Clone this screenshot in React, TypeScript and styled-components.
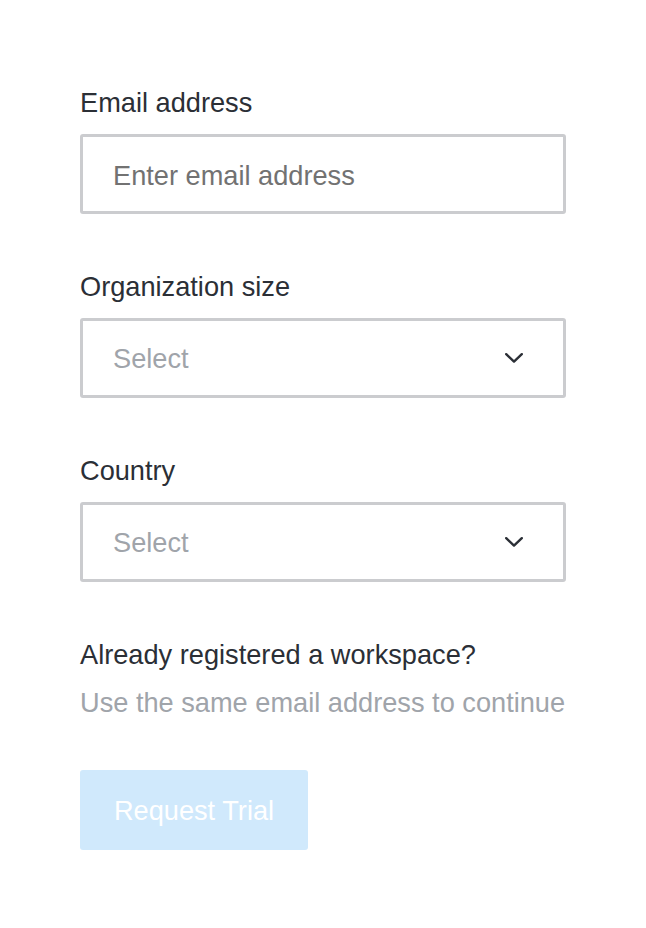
import React from "react";
import styled, { createGlobalStyle } from "styled-components";

const GlobalStyle = createGlobalStyle`
  html, body { margin: 0; padding: 0; background: #ffffff; }
  body { font-family: "Liberation Sans", Arial, Helvetica, sans-serif; }
  * { box-sizing: border-box; }
`;

const Page = styled.div`
  padding: 87px 80px 0 80px;
  width: 646px;
`;

const Form = styled.form`
  display: flex;
  flex-direction: column;
  width: 486px;
`;

const Field = styled.div`
  display: flex;
  flex-direction: column;
  gap: 15px;
  margin-bottom: 57px;
`;

const Label = styled.label`
  font-size: 27.2px;
  line-height: 32px;
  color: #2b2f36;
`;

const TextInput = styled.input`
  height: 80px;
  width: 100%;
  border: 3px solid #cbcccf;
  border-radius: 3px;
  padding: 3px 0 0 30px;
  font-family: "Liberation Sans", Arial, Helvetica, sans-serif;
  font-size: 27.2px;
  color: #2b2f36;
  outline: none;
  background: #fff;
  &::placeholder { color: #727272; }
`;

const SelectBox = styled.div`
  height: 80px;
  width: 100%;
  border: 3px solid #cbcccf;
  border-radius: 3px;
  padding: 0 40px 0 30px;
  display: flex;
  align-items: center;
  justify-content: space-between;
  background: #fff;
`;

const SelectText = styled.span`
  font-size: 27.2px;
  color: #a0a4aa;
  padding-top: 2px;
`;

const Chevron = styled.svg`
  width: 18px;
  height: 10px;
  display: block;
`;

const Notice = styled.div`
  display: flex;
  flex-direction: column;
  gap: 16px;
  margin-bottom: 51px;
`;

const NoticeTitle = styled.div`
  font-size: 27.2px;
  line-height: 32px;
  color: #2b2f36;
`;

const NoticeHint = styled.div`
  font-size: 27.2px;
  line-height: 32px;
  color: #a0a4aa;
  white-space: nowrap;
`;

const SubmitButton = styled.button`
  width: 228px;
  height: 80px;
  border: none;
  border-radius: 3px;
  background: #d0e9fc;
  color: #ffffff;
  font-family: "Liberation Sans", Arial, Helvetica, sans-serif;
  font-size: 27.2px;
  padding: 2px 0 0 0;
  cursor: not-allowed;
`;

const Select = ({ id }: { id: string }) => (
  <SelectBox id={id} role="combobox">
    <SelectText>Select</SelectText>
    <Chevron viewBox="0 0 18 10" fill="none">
      <path d="M1.2 1.2 L9 8.6 L16.8 1.2" stroke="#2b2f36" strokeWidth="2.4" strokeLinecap="round" strokeLinejoin="round" />
    </Chevron>
  </SelectBox>
);

export default function App() {
  return (
    <>
      <GlobalStyle />
      <Page>
        <Form onSubmit={(e) => e.preventDefault()}>
          <Field>
            <Label htmlFor="email">Email address</Label>
            <TextInput id="email" type="email" placeholder="Enter email address" />
          </Field>
          <Field>
            <Label htmlFor="orgsize">Organization size</Label>
            <Select id="orgsize" />
          </Field>
          <Field>
            <Label htmlFor="country">Country</Label>
            <Select id="country" />
          </Field>
          <Notice>
            <NoticeTitle>Already registered a workspace?</NoticeTitle>
            <NoticeHint>Use the same email address to continue</NoticeHint>
          </Notice>
          <SubmitButton type="submit" disabled>Request Trial</SubmitButton>
        </Form>
      </Page>
    </>
  );
}
